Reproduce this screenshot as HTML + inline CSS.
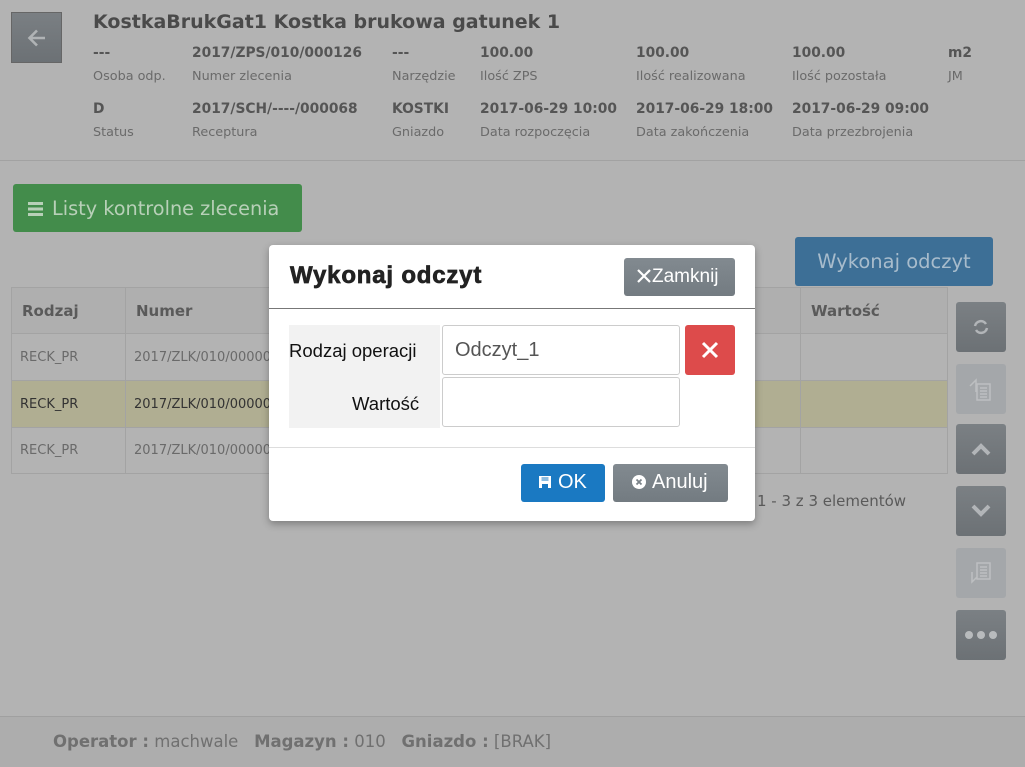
<!DOCTYPE html>
<html><head><meta charset="utf-8"><style>
*{box-sizing:border-box;margin:0;padding:0}
body{width:1025px;height:767px;background:#b3b3b3;position:relative;overflow:hidden;font-family:"DejaVu Sans","Liberation Sans",sans-serif;color:#555}
.a{position:absolute;white-space:nowrap}
.v{font-weight:bold;font-size:13.8px;color:#555}
.l{font-size:12.8px;color:#6a6a6a}
.sb{position:absolute;left:956px;width:50px;height:50px;border-radius:3px;background:linear-gradient(#7b8084,#6c7175);display:flex;align-items:center;justify-content:center}
.sb.d{background:#a4a7aa}
td{border-right:1px solid #a3a3a3;border-bottom:1px solid #a3a3a3;font-size:13px;color:#6a6a6a;padding-left:8px}
th{border-right:1px solid #a3a3a3;border-bottom:1px solid #a3a3a3;font-size:15px;color:#5a5a5a;text-align:left;padding-left:10px}
</style></head><body>
<div class="a" style="left:0;top:0;width:1025px;height:161px;background:#b3b3b3;border-bottom:1px solid #a2a2a2"></div>
<div class="a" style="left:11px;top:12px;width:51px;height:51px;background:linear-gradient(#7a7f83,#6c7175);border:1px solid #666;display:flex;align-items:center;justify-content:center">
<svg width="22" height="22" viewBox="0 0 22 22"><path d="M19 11H4M11 3.5L3.5 11 11 18.5" stroke="#b0b3b5" stroke-width="2.6" fill="none"/></svg></div>
<div class="a" style="left:93px;top:11px;font-size:19px;font-weight:bold;color:#4a4a4a">KostkaBrukGat1 Kostka brukowa gatunek 1</div>
<div class="a v" style="left:93px;top:45px">---</div><div class="a l" style="left:93px;top:69px">Osoba odp.</div>
<div class="a v" style="left:192px;top:45px">2017/ZPS/010/000126</div><div class="a l" style="left:192px;top:69px">Numer zlecenia</div>
<div class="a v" style="left:392px;top:45px">---</div><div class="a l" style="left:392px;top:69px">Narzędzie</div>
<div class="a v" style="left:480px;top:45px">100.00</div><div class="a l" style="left:480px;top:69px">Ilość ZPS</div>
<div class="a v" style="left:636px;top:45px">100.00</div><div class="a l" style="left:636px;top:69px">Ilość realizowana</div>
<div class="a v" style="left:792px;top:45px">100.00</div><div class="a l" style="left:792px;top:69px">Ilość pozostała</div>
<div class="a v" style="left:948px;top:45px">m2</div><div class="a l" style="left:948px;top:69px">JM</div>
<div class="a v" style="left:93px;top:101px">D</div><div class="a l" style="left:93px;top:125px">Status</div>
<div class="a v" style="left:192px;top:101px">2017/SCH/----/000068</div><div class="a l" style="left:192px;top:125px">Receptura</div>
<div class="a v" style="left:392px;top:101px">KOSTKI</div><div class="a l" style="left:392px;top:125px">Gniazdo</div>
<div class="a v" style="left:480px;top:101px">2017-06-29 10:00</div><div class="a l" style="left:480px;top:125px">Data rozpoczęcia</div>
<div class="a v" style="left:636px;top:101px">2017-06-29 18:00</div><div class="a l" style="left:636px;top:125px">Data zakończenia</div>
<div class="a v" style="left:792px;top:101px">2017-06-29 09:00</div><div class="a l" style="left:792px;top:125px">Data przezbrojenia</div>

<div class="a" style="left:13px;top:184px;width:289px;height:48px;background:#438c4b;border-radius:3px;color:#b8d0b8;font-size:19.3px;padding:13px 0 0 15px">
<span style="display:inline-block;width:15px;height:14px;background:linear-gradient(#b8d0b8 0 3px,transparent 3px 5.5px,#b8d0b8 5.5px 8.5px,transparent 8.5px 11px,#b8d0b8 11px);vertical-align:-1px;margin-right:9px"></span>Listy kontrolne zlecenia</div>
<div class="a" style="left:795px;top:237px;width:198px;height:49px;background:#3d6f96;border-radius:3px;color:#a8bccc;font-size:19.5px;text-align:center;padding-top:13px">Wykonaj odczyt</div>

<table class="a" style="left:11px;top:287px;width:937px;border-collapse:collapse;border:1px solid #a3a3a3">
<tr style="height:46px;background:#afafaf"><th style="width:114px">Rodzaj</th><th style="width:675px">Numer</th><th>Wartość</th></tr>
<tr style="height:47px"><td>RECK_PR</td><td>2017/ZLK/010/00000</td><td></td></tr>
<tr style="height:47px;background:#b0ae92"><td style="color:#333">RECK_PR</td><td style="color:#333">2017/ZLK/010/00000</td><td></td></tr>
<tr style="height:46px"><td>RECK_PR</td><td>2017/ZLK/010/00000</td><td></td></tr>
</table>
<div class="a" style="left:757px;top:492px;font-size:15px;color:#5a5a5a">1 - 3 z 3 elementów</div>

<div class="sb" style="top:302px"><svg width="18" height="18" viewBox="0 0 18 18"><path d="M3 8a6 6 0 0 1 11-2M15 10a6 6 0 0 1-11 2" stroke="#b2b5b8" stroke-width="2.5" fill="none"/></svg></div>
<div class="sb d" style="top:364px"><svg width="26" height="26" viewBox="0 0 26 26" fill="none" stroke="#bdbfc1" stroke-width="1.5"><path d="M9 8h13v16H9z M12 12h7M12 15h7M12 18h7M12 21h7M2 10l6-6v12"/></svg></div>
<div class="sb" style="top:424px"><svg width="20" height="14" viewBox="0 0 20 14"><path d="M2 12l8-8 8 8" stroke="#b2b5b8" stroke-width="4" fill="none"/></svg></div>
<div class="sb" style="top:486px"><svg width="20" height="14" viewBox="0 0 20 14"><path d="M2 2l8 8 8-8" stroke="#b2b5b8" stroke-width="4" fill="none"/></svg></div>
<div class="sb d" style="top:548px"><svg width="26" height="26" viewBox="0 0 26 26" fill="none" stroke="#bdbfc1" stroke-width="1.5"><path d="M9 3h13v16H9z M12 7h7M12 10h7M12 13h7M12 16h7M4 12v10l5-5"/></svg></div>
<div class="sb" style="top:610px"><svg width="34" height="10"><circle cx="5" cy="5" r="4" fill="#b8bbbd"/><circle cx="17" cy="5" r="4" fill="#b8bbbd"/><circle cx="29" cy="5" r="4" fill="#b8bbbd"/></svg></div>

<div class="a" style="left:0;top:716px;width:1025px;height:51px;background:#adadad;border-top:1px solid #a0a0a0"></div>
<div class="a" style="left:53px;top:732px;font-family:'DejaVu Sans',sans-serif;font-size:16.5px;color:#707070"><b>Operator :</b> machwale &nbsp; <b>Magazyn :</b> 010 &nbsp; <b>Gniazdo :</b> [BRAK]</div>

<div class="a" style="left:269px;top:245px;width:486px;height:276px;background:#fff;border-radius:4px;box-shadow:0 3px 8px rgba(0,0,0,.3);font-family:'Liberation Sans',sans-serif">
<div class="a" style="left:21px;top:17px;font-size:24px;font-weight:900;color:#222;letter-spacing:.8px;-webkit-text-stroke:.7px #222">Wykonaj odczyt</div>
<div class="a" style="left:355px;top:13px;width:111px;height:38px;border-radius:3px;background:linear-gradient(#828a90,#737b81);color:#fff;font-size:19px;padding:8px 0 0 12px"><svg width="16" height="16" viewBox="0 0 16 16" style="vertical-align:-2px"><path d="M2 2l12 12M14 2L2 14" stroke="#fff" stroke-width="2.2"/></svg>Zamknij</div>
<div class="a" style="left:0;top:63px;width:486px;height:1px;background:#777"></div>
<div class="a" style="left:20px;top:80px;width:446px;height:103px;background:#f2f2f2"></div>
<div class="a" style="left:171px;top:80px;width:300px;height:105px;background:#fff"></div>
<div class="a" style="left:20px;top:95px;font-size:18.5px;color:#111">Rodzaj operacji</div>
<div class="a" style="left:83px;top:148px;font-size:18.5px;color:#111">Wartość</div>
<div class="a" style="left:173px;top:80px;width:238px;height:50px;border:1px solid #ccc;border-radius:3px;font-size:20px;color:#555;padding:13px 0 0 12px">Odczyt_1</div>
<div class="a" style="left:173px;top:132px;width:238px;height:50px;border:1px solid #ccc;border-radius:3px"></div>
<div class="a" style="left:416px;top:80px;width:50px;height:50px;background:#dd4b4b;border-radius:3px;display:flex;align-items:center;justify-content:center"><svg width="18" height="18"><path d="M2 2l14 14M16 2L2 16" stroke="#fff" stroke-width="3"/></svg></div>
<div class="a" style="left:0;top:202px;width:486px;height:1px;background:#ddd"></div>
<div class="a" style="left:252px;top:219px;width:84px;height:38px;background:#1a79c2;border-radius:3px;color:#fff;font-size:20px;padding:7px 0 0 17px"><svg width="14" height="14" viewBox="0 0 14 14" style="vertical-align:-1px;margin-right:6px"><path d="M1 1h12v12H1z" fill="#fff"/><path d="M3.5 3h7M3.5 5h7" stroke="#1a79c2" stroke-width="1"/><rect x="4" y="9" width="6" height="4" fill="#1a79c2"/></svg>OK</div>
<div class="a" style="left:344px;top:219px;width:115px;height:38px;background:linear-gradient(#828a90,#737b81);border-radius:3px;color:#fff;font-size:20px;padding:7px 0 0 19px"><svg width="14" height="14" viewBox="0 0 14 14" style="vertical-align:-1px;margin-right:6px"><circle cx="7" cy="7" r="7" fill="#fff"/><path d="M4.5 4.5l5 5M9.5 4.5l-5 5" stroke="#7a8288" stroke-width="1.8"/></svg>Anuluj</div>
</div>
</body></html>
